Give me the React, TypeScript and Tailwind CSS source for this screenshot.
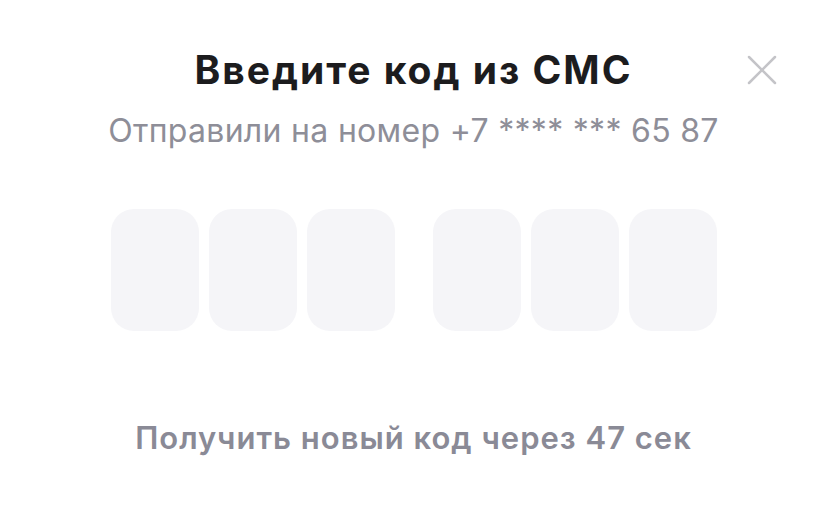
import { X } from "lucide-react";

function CodeCell() {
  return <div className="h-[122px] w-[88px] rounded-[23px] bg-[#f5f5f8]" />;
}

export default function App() {
  return (
    <div className="relative flex h-[531px] w-[832px] flex-col items-center bg-white pr-[5px] font-['Inter',sans-serif]">
      <button className="absolute right-[44px] top-[44px] text-[#c4c4c8]" aria-label="Закрыть">
        <X size={52} strokeWidth={1.15} />
      </button>
      <h1 className="mt-[44px] text-[39px] font-bold leading-[52px] tracking-[2px] text-[#1c1c1e]">Введите код из СМС</h1>
      <p className="mt-[15px] text-[32px] leading-[40px] tracking-[0.3px] text-[#8e8e98]">Отправили на номер +7 **** *** 65 87</p>
      <div className="mt-[58px] flex gap-[38px]">
        <div className="flex gap-[10px]">
          <CodeCell />
          <CodeCell />
          <CodeCell />
        </div>
        <div className="flex gap-[10px]">
          <CodeCell />
          <CodeCell />
          <CodeCell />
        </div>
      </div>
      <p className="mt-[87px] text-[31px] font-semibold leading-[40px] tracking-[1px] text-[#8a8a96]">Получить новый код через 47 сек</p>
    </div>
  );
}
